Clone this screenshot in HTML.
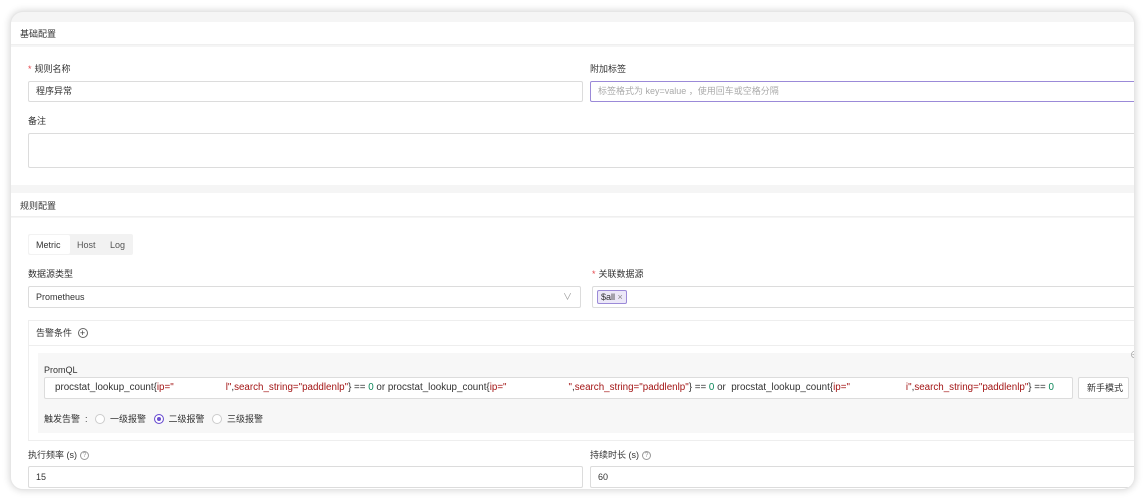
<!DOCTYPE html>
<html><head><meta charset="utf-8"><style>
*{box-sizing:border-box;margin:0;padding:0}
body{width:1146px;height:500px;background:#fff;position:relative;overflow:hidden;font-family:"Liberation Sans","Noto Sans CJK SC",sans-serif;font-size:9px;color:#333}
.card{position:absolute;left:10px;top:11px;width:1125px;height:479px;border-radius:13px;background:#f5f5f5;box-shadow:0 0 8px rgba(0,0,0,.18);overflow:hidden;border:1px solid #e6e6e6}
.a{position:absolute}
.w{background:#fff}
.lb{position:absolute;font-size:9px;color:#333;line-height:11px;white-space:nowrap}
.req{color:#e5484d;margin-right:3px}
.in{position:absolute;border:1px solid #dcdcdc;background:#fff;border-radius:2px;font-size:9px;line-height:19px;padding-left:7px;color:#333}
.q{display:inline-block;width:9px;height:9px;border:1px solid #999;border-radius:50%;font-size:7px;line-height:7px;text-align:center;color:#999;vertical-align:top;margin-top:1px;margin-left:3px}
.r{color:#a31515}.n{color:#098658}
.rad{display:inline-block;width:10px;height:10px;border:1px solid #ccc;border-radius:50%;vertical-align:-2px;margin-right:5px;background:#fff}
</style></head><body>
<div class="card">
 <div class="a w" style="left:0;top:10px;width:1125px;height:23px;border-bottom:1px solid #efefef"></div>
 <div class="lb" style="left:9px;top:17px">基础配置</div>
 <div class="a w" style="left:0;top:35px;width:1125px;height:138px"></div>
 <div class="lb" style="left:17px;top:52px"><span class="req">*</span>规则名称</div>
 <div class="in" style="left:17px;top:69px;width:555px;height:21px">程序异常</div>
 <div class="lb" style="left:579px;top:52px">附加标签</div>
 <div class="in" style="left:579px;top:69px;width:560px;height:21px;border-color:#9b8ad8;color:#aaa">标签格式为 key=value ，使用回车或空格分隔</div>
 <div class="lb" style="left:17px;top:104px">备注</div>
 <div class="in" style="left:17px;top:121px;width:1120px;height:35px"></div>
 <div class="a w" style="left:0;top:181px;width:1125px;height:24px;border-bottom:1px solid #efefef"></div>
 <div class="lb" style="left:9px;top:189px">规则配置</div>
 <div class="a w" style="left:0;top:206px;width:1125px;height:280px"></div>
 <div class="a" style="left:17px;top:222px;width:105px;height:21px;background:#f2f2f2;border-radius:2px"></div>
 <div class="a w" style="left:18px;top:223px;width:41px;height:19px;border-radius:2px"></div>
 <div class="lb" style="left:25px;top:228px">Metric</div>
 <div class="lb" style="left:66px;top:228px;color:#555">Host</div>
 <div class="lb" style="left:99px;top:228px;color:#555">Log</div>
 <div class="lb" style="left:17px;top:257px">数据源类型</div>
 <div class="in" style="left:17px;top:274px;width:553px;height:22px;line-height:20px">Prometheus<span style="position:absolute;right:8px;top:0;color:#999">&#8744;</span></div>
 <div class="lb" style="left:581px;top:257px"><span class="req">*</span>关联数据源</div>
 <div class="in" style="left:581px;top:274px;width:560px;height:22px;padding-left:4px"><span style="display:inline-block;margin-top:3px;height:14px;line-height:12px;border:1px solid #9b8ad8;background:#ece8f8;padding:0 3px;font-size:9px;border-radius:2px">$all <span style="color:#888">×</span></span></div>
 <div class="a" style="left:17px;top:308px;width:1120px;height:121px;border:1px solid #eee"></div>
 <div class="a" style="left:17px;top:333px;width:1120px;height:1px;background:#eee"></div>
 <div class="lb" style="left:25px;top:316px">告警条件 <span style="display:inline-block;width:10px;height:10px;border:1px solid #666;border-radius:50%;font-size:9px;line-height:8px;text-align:center;margin-left:3px">+</span></div>
 <div class="a" style="left:27px;top:341px;width:1110px;height:80px;background:#f7f7f7"></div>
 <div class="lb" style="left:33px;top:353px">PromQL</div>
 <div class="in" style="left:33px;top:365px;width:1029px;height:22px;line-height:20px;padding-left:10px;white-space:nowrap;overflow:hidden;font-size:9.8px">procstat_lookup_count{<span class="r">ip="</span><span style="display:inline-block;width:52px"></span><span class="r">l"</span>,<span class="r">search_string="paddlenlp"</span>} == <span class="n">0</span> or procstat_lookup_count{<span class="r">ip="</span><span style="display:inline-block;width:62px"></span><span class="r">"</span>,<span class="r">search_string="paddlenlp"</span>} == <span class="n">0</span> or &nbsp;procstat_lookup_count{<span class="r">ip="</span><span style="display:inline-block;width:56px"></span><span class="r">i"</span>,<span class="r">search_string="paddlenlp"</span>} == <span class="n">0</span></div>
 <div class="in" style="left:1067px;top:365px;width:51px;height:22px;line-height:20px;padding-left:8px">新手模式</div>
 <div class="lb" style="left:1119px;top:338px;color:#999">&#8854;</div>
 <div class="lb" style="left:33px;top:402px">触发告警 &nbsp;: &nbsp; <span class="rad"></span>一级报警 &nbsp; <span class="rad" style="border-color:#6b4fd0;box-shadow:inset 0 0 0 2px #fff;background:#6b4fd0"></span>二级报警 &nbsp; <span class="rad"></span>三级报警</div>
 <div class="lb" style="left:17px;top:438px">执行频率 (s)<span class="q">?</span></div>
 <div class="in" style="left:17px;top:454px;width:555px;height:22px;line-height:20px">15</div>
 <div class="lb" style="left:579px;top:438px">持续时长 (s)<span class="q">?</span></div>
 <div class="in" style="left:579px;top:454px;width:560px;height:22px;line-height:20px">60</div>
</div>
</body></html>
